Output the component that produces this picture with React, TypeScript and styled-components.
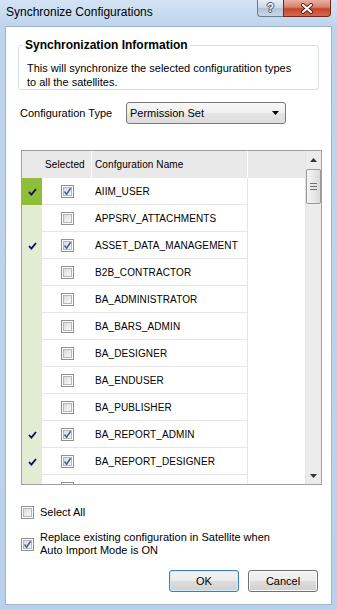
import React from 'react';
import styled, { createGlobalStyle } from 'styled-components';

const GlobalStyle = createGlobalStyle`
  html, body {
    margin: 0;
    padding: 0;
  }
  body {
    width: 337px;
    height: 610px;
    overflow: hidden;
    font-family: "Liberation Sans", Arial, sans-serif;
  }
`;

const Window = styled.div`
  width: 337px;
  height: 610px;
  display: flex;
  flex-direction: column;
  background: linear-gradient(180deg, #d3e3f4 0px, #bfd5ed 26px, #b9d1eb 100%);
`;

const TitleBar = styled.div`
  height: 26px;
  flex: none;
  display: flex;
  align-items: flex-start;
  padding: 0 6px;
`;

const Title = styled.div`
  font-size: 12px;
  line-height: 14px;
  margin-top: 5px;
  color: #000;
`;

const Captions = styled.div`
  margin-left: auto;
  display: flex;
`;

const HelpButton = styled.div`
  width: 26px;
  height: 17px;
  box-sizing: border-box;
  border: 1px solid #6a7b90;
  border-top: none;
  border-right: none;
  border-radius: 0 0 0 4px;
  background: linear-gradient(180deg, #e9eef5 0%, #cbd6e4 48%, #b3c3d7 52%, #c7d6e8 100%);
  display: flex;
  align-items: center;
  justify-content: center;
  color: #fff;
  font-weight: bold;
  font-size: 12px;
  text-shadow: 0 0 1px #3b4552, 1px 0 0 #4d5866, -1px 0 0 #4d5866, 0 1px 0 #4d5866, 0 -1px 0 #4d5866;
`;

const CloseButton = styled.div`
  width: 48px;
  height: 17px;
  box-sizing: border-box;
  border: 1px solid #6e2a20;
  border-top: none;
  border-radius: 0 0 4px 0;
  background: linear-gradient(180deg, #eab0a2 0%, #d9806b 45%, #c5452c 55%, #d26a4c 100%);
  display: flex;
  align-items: center;
  justify-content: center;
`;

const Client = styled.div`
  flex: 1;
  margin: 0 5px 5px;
  background: #fff;
  border: 1px solid #9fb5cc;
  display: flex;
  flex-direction: column;
  font-size: 11px;
  color: #000;
`;

const GroupBox = styled.fieldset`
  margin: 11px 0 0 12px;
  padding: 9px 0 0 4px;
  width: 301px;
  box-sizing: border-box;
  border: 1px solid #d5dfe5;
  border-radius: 3px;
  min-inline-size: 0;
`;

const GroupTitle = styled.legend`
  font-weight: bold;
  font-size: 12px;
  line-height: 14px;
  padding: 0 2px;
`;

const Info = styled.div`
  margin-left: 4px;
  line-height: 14px;
`;

const FieldRow = styled.div`
  display: flex;
  align-items: center;
  margin: 12px 0 0 14px;
  height: 22px;
`;

const FieldLabel = styled.span`
  width: 106px;
`;

const Combo = styled.div`
  width: 160px;
  height: 22px;
  box-sizing: border-box;
  border: 1px solid #7a7a7a;
  border-radius: 3px;
  background: linear-gradient(180deg, #f7f7f7 0%, #efefef 50%, #e5e5e5 51%, #dcdcdc 100%);
  display: flex;
  align-items: center;
  justify-content: space-between;
  padding: 0 6px 0 3px;
`;

const Grid = styled.div`
  margin: 26px 0 0 15px;
  width: 301px;
  height: 335px;
  box-sizing: border-box;
  border: 1px solid #a0a0a0;
  display: flex;
  font-size: 10px;
  letter-spacing: 0.1px;
`;

const GridBody = styled.div`
  flex: 1;
  display: flex;
  flex-direction: column;
  overflow: hidden;
`;

const HeaderRow = styled.div`
  height: 27px;
  flex: none;
  display: flex;
  background: #e9e9ea;
`;

const HeaderCell = styled.div<{ $w?: number; $line?: boolean }>`
  ${(p) => (p.$w ? `width: ${p.$w}px;` : 'flex: 1;')}
  flex-shrink: 0;
  box-sizing: border-box;
  display: flex;
  align-items: center;
  padding-left: 3px;
  border-right: ${(p) => (p.$line ? '1px solid #ffffff' : 'none')};
`;

const Row = styled.div`
  height: 27px;
  flex: none;
  display: flex;
`;

const Indicator = styled.div<{ $current?: boolean }>`
  width: 20px;
  flex: none;
  background: ${(p) => (p.$current ? '#8fbe3b' : '#e2ecd2')};
  display: flex;
  align-items: center;
  justify-content: center;
`;

const SelectCell = styled.div`
  width: 50px;
  flex: none;
  box-sizing: border-box;
  border-bottom: 1px solid #e6e6e6;
  display: flex;
  align-items: center;
  justify-content: center;
  padding-left: 1px;
`;

const NameCell = styled.div`
  width: 156px;
  flex: none;
  box-sizing: border-box;
  border-bottom: 1px solid #e6e6e6;
  border-right: 1px solid #e6e6e6;
  display: flex;
  align-items: center;
  padding-left: 3px;
  white-space: nowrap;
`;

const FillCell = styled.div`
  flex: 1;
`;

const ScrollBar = styled.div`
  width: 16px;
  flex: none;
  background: #ececec;
  border-left: 1px solid #e2e2e2;
  box-sizing: border-box;
  display: flex;
  flex-direction: column;
`;

const ScrollArrow = styled.div`
  height: 17px;
  flex: none;
  display: flex;
  align-items: center;
  justify-content: center;
`;

const Thumb = styled.div`
  height: 35px;
  margin: 1px 0 0 0;
  box-sizing: border-box;
  border: 1px solid #9a9a9a;
  border-radius: 2px;
  background: linear-gradient(90deg, #f5f5f5 0%, #e8e8e8 50%, #dadada 100%);
  display: flex;
  flex-direction: column;
  align-items: center;
  justify-content: center;
  gap: 2px;
`;

const Grip = styled.div`
  width: 7px;
  height: 1px;
  background: #6f6f6f;
`;

const ScrollSpace = styled.div`
  flex: 1;
`;

const Option = styled.label<{ $top: number }>`
  display: flex;
  align-items: center;
  gap: 6px;
  margin: ${(p) => p.$top}px 0 0 15px;
  line-height: 13px;
`;

const BoxFrame = styled.span`
  width: 13px;
  height: 13px;
  flex: none;
  box-sizing: border-box;
  border: 1px solid #8f8f8f;
  padding: 1px;
  background: #fff;
  display: inline-block;
`;

const BoxInner = styled.span`
  display: flex;
  width: 100%;
  height: 100%;
  box-sizing: border-box;
  border: 1px solid #b7b7b7;
  background: linear-gradient(135deg, #d9d9d9 0%, #ededed 55%, #f8f8f8 100%);
  align-items: center;
  justify-content: center;
  overflow: visible;
  position: relative;
`;

const Buttons = styled.div`
  display: flex;
  justify-content: flex-end;
  gap: 9px;
  margin: 13px 13px 0 0;
`;

const Button = styled.button<{ $default?: boolean }>`
  width: 70px;
  height: 22px;
  box-sizing: border-box;
  font-family: "Liberation Sans", Arial, sans-serif;
  font-size: 11px;
  color: #000;
  border: 1px solid ${(p) => (p.$default ? '#3c7fb1' : '#707070')};
  border-radius: 3px;
  box-shadow: ${(p) => (p.$default ? 'inset 0 0 0 1px #cfeafb' : 'inset 0 0 0 1px #fbfbfb')};
  background: linear-gradient(180deg, #f3f3f3 0%, #ebebeb 50%, #dddddd 51%, #d0d0d0 100%);
  padding: 0;
`;

function Check({ checked }: { checked: boolean }) {
  return (
    <BoxFrame>
      <BoxInner>
        {checked && (
          <svg width="11" height="11" viewBox="0 0 11 11" style={{ position: 'absolute', left: -2, top: -2 }}>
            <path d="M2.5 5.5 L4.6 8.2 L8.6 2.2" fill="none" stroke="#4a62a5" strokeWidth="1.6" strokeLinejoin="round" />
          </svg>
        )}
      </BoxInner>
    </BoxFrame>
  );
}

function Tick() {
  return (
    <svg width="9" height="8" viewBox="0 0 9 8">
      <path d="M1 4 L3.4 6.6 L8 1" fill="none" stroke="#0d0d5e" strokeWidth="1.8" />
    </svg>
  );
}

// the last row only peeks in under the header edge, its name is hidden
const rows = [
  { name: 'AIIM_USER', checked: true },
  { name: 'APPSRV_ATTACHMENTS', checked: false },
  { name: 'ASSET_DATA_MANAGEMENT', checked: true },
  { name: 'B2B_CONTRACTOR', checked: false },
  { name: 'BA_ADMINISTRATOR', checked: false },
  { name: 'BA_BARS_ADMIN', checked: false },
  { name: 'BA_DESIGNER', checked: false },
  { name: 'BA_ENDUSER', checked: false },
  { name: 'BA_PUBLISHER', checked: false },
  { name: 'BA_REPORT_ADMIN', checked: true },
  { name: 'BA_REPORT_DESIGNER', checked: true },
  { name: '', checked: false },
];

export default function App() {
  return (
    <Window>
      <GlobalStyle />
      <TitleBar>
        <Title>Synchronize Configurations</Title>
        <Captions>
          <HelpButton>?</HelpButton>
          <CloseButton>
            <svg width="14" height="11" viewBox="0 0 14 11">
              <path d="M3 2 L11 9 M11 2 L3 9" stroke="#5a2018" strokeWidth="4" strokeLinecap="round" />
              <path d="M3 2 L11 9 M11 2 L3 9" stroke="#ffffff" strokeWidth="2.2" strokeLinecap="round" />
            </svg>
          </CloseButton>
        </Captions>
      </TitleBar>
      <Client>
        <GroupBox>
          <GroupTitle>Synchronization Information</GroupTitle>
          <Info>
            This will synchronize the selected configuratition types
            <br />
            to all the satellites.
          </Info>
        </GroupBox>

        <FieldRow>
          <FieldLabel>Configuration Type</FieldLabel>
          <Combo>
            <span>Permission Set</span>
            <svg width="7" height="4" viewBox="0 0 7 4">
              <path d="M0 0 H7 L3.5 4 Z" fill="#000" />
            </svg>
          </Combo>
        </FieldRow>

        <Grid>
          <GridBody>
            <HeaderRow>
              <HeaderCell $w={20} />
              <HeaderCell $w={50} $line>Selected</HeaderCell>
              <HeaderCell $w={156} $line>Confguration Name</HeaderCell>
              <HeaderCell />
            </HeaderRow>
            {rows.map((r, i) => (
              <Row key={i}>
                <Indicator $current={i === 0}>{r.checked && <Tick />}</Indicator>
                <SelectCell>
                  <Check checked={r.checked} />
                </SelectCell>
                <NameCell>{r.name}</NameCell>
                <FillCell />
              </Row>
            ))}
          </GridBody>
          <ScrollBar>
            <ScrollArrow>
              <svg width="7" height="4" viewBox="0 0 7 4">
                <path d="M0 4 H7 L3.5 0 Z" fill="#333" />
              </svg>
            </ScrollArrow>
            <Thumb>
              <Grip />
              <Grip />
              <Grip />
            </Thumb>
            <ScrollSpace />
            <ScrollArrow>
              <svg width="7" height="4" viewBox="0 0 7 4">
                <path d="M0 0 H7 L3.5 4 Z" fill="#333" />
              </svg>
            </ScrollArrow>
          </ScrollBar>
        </Grid>

        <Option $top={21}>
          <Check checked={false} />
          <span>Select All</span>
        </Option>
        <Option $top={12}>
          <Check checked={true} />
          <span>
            Replace existing configuration in Satellite when
            <br />
            Auto Import Mode is ON
          </span>
        </Option>

        <Buttons>
          <Button $default>OK</Button>
          <Button>Cancel</Button>
        </Buttons>
      </Client>
    </Window>
  );
}
